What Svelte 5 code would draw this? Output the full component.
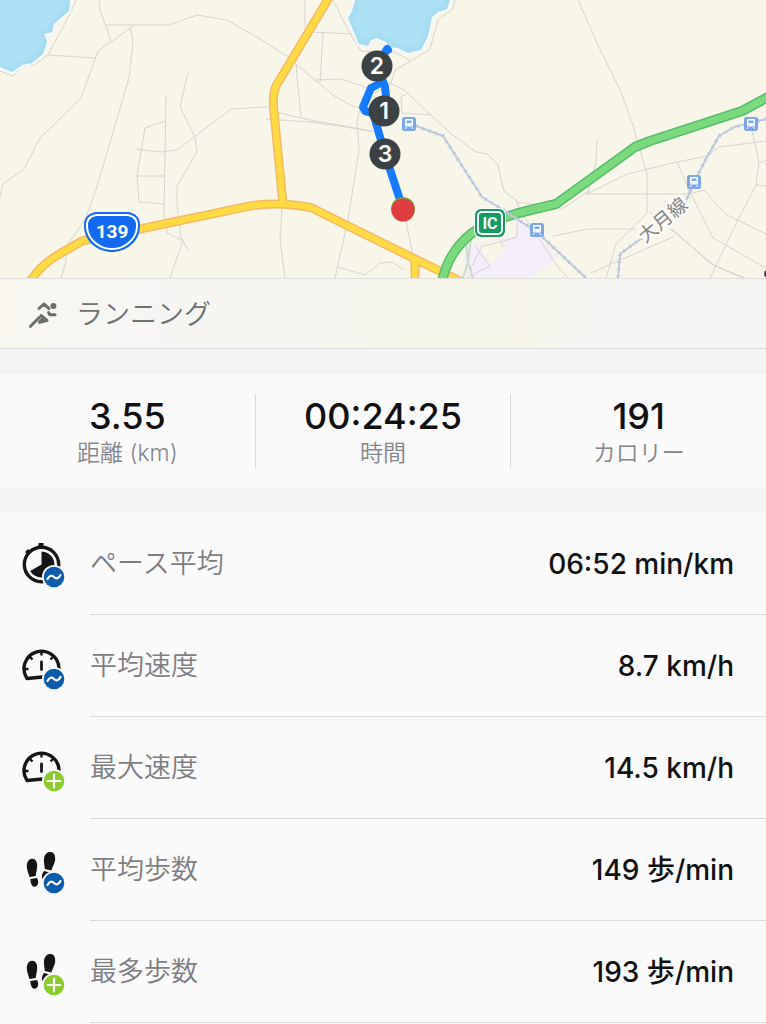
<script lang="ts">
  const stats = [
    { value: '3.55', label: '距離 (km)' },
    { value: '00:24:25', label: '時間' },
    { value: '191', label: 'カロリー' }
  ];

  const rows = [
    { icon: 'timer', badge: 'avg', label: 'ペース平均', value: '06:52 min/km' },
    { icon: 'gauge', badge: 'avg', label: '平均速度', value: '8.7 km/h' },
    { icon: 'gauge', badge: 'max', label: '最大速度', value: '14.5 km/h' },
    { icon: 'steps', badge: 'avg', label: '平均歩数', value: '149 歩/min' },
    { icon: 'steps', badge: 'max', label: '最多歩数', value: '193 歩/min' }
  ];

  // small streets
  const streets = [
    'M76 0L70 14L48 55L34 65L22 66L13 76L0 71',
    'M48 55L96 58',
    'M100 0L99 7L111 41',
    'M106 25H169L197 15L227 20L260 39L287 56L297 65L333 95L352 106L361 108',
    'M133 26L98 51L81 98L40 138L24 169L3 184L0 197',
    'M130 27L133 41L129 78L96 190L85 220L68 244L65 265L61 278',
    'M166 95L164 216L167 233L183 241L188 250',
    'M165 121L145 128L137 175L139 202L164 204',
    'M137 176H164',
    'M135 149L161 152L177 150L231 109L266 107L280 113L310 120L372 131',
    'M188 73L180 107L195 137L197 152L177 186V204L181 237L183 241L170 278',
    'M305 0V28',
    'M333 0L348 30L361 51L395 52L411 61L395 70L391 83L375 93',
    'M312 32L352 34M323 33L320 83M296 65L301 117',
    'M314 80L341 79L368 88L390 83L404 90L449 132L476 152L488 154L498 165L501 180L504 191L516 200L520 211L558 267L568 278',
    'M266 119L310 122L340 126L374 132',
    'M360 108L357 122L359 150L348 220L335 278',
    'M455 0L453 9L438 20L430 49L411 61',
    'M406 94L401 97L402 113L432 115',
    'M282 208L280 240L285 278',
    'M337 267L365 275L380 263L392 262L404 270',
    'M406 221L415 266',
    'M578 0L597 43L620 90L633 125L637 140L647 174V213L616 244L606 278',
    'M597 140L596 163L587 194H690L704 190',
    'M587 194L627 174L677 162L707 156L719 147L766 141',
    'M677 162L691 194L713 238L766 268',
    'M560 210L570 204L590 190M516 202L560 208',
    'M553 236L588 229H636',
    'M591 273L675 236',
    'M665 200V214M650 212L715 266L766 288M672 229L711 264L745 278',
    'M704 190L725 214L766 234',
    'M752 130L759 162L756 185L733 230L710 278',
    'M766 160L759 163M756 185L766 186',
    'M517 222V237L500 242L482 246L470 270M475 246L490 266L466 278M500 240L503 247'
  ];

  // [x, y] of each station marker
  const stations = [[409, 124], [537, 230], [694, 182], [751, 124]];

  // kilometre marks along the run
  const marks = [
    { n: 2, x: 377, y: 66 },
    { n: 1, x: 384, y: 111 },
    { n: 3, x: 385, y: 154 }
  ];

  const railway = 'M416 126L443 136L482 197L500 208L537 232L586 278M766 119L734 127L719 136L707 157L694 182L684 206M642 238L620 254L618 278';
  const highways = 'M330 -4L276 86Q272 96 274 112L283 204M28 284Q40 266 56 256L82 241L140 229L250 206Q280 201 312 208L344 224L462 282M415 262V280';
  const expressway = 'M442 282Q448 252 472 233C490 219 525 211 556 204L635 147L650 141L742 111L770 96';
</script>

<main class="workout">
  <svg class="map" viewBox="0 0 766 278" role="img" aria-label="Route map">
    <defs>
      <filter id="shore" x="-10%" y="-10%" width="120%" height="120%">
        <feGaussianBlur stdDeviation="3" />
      </filter>
      <clipPath id="lakes">
        <path d="M0 0H70L69 11L54 24L52 32L44 34L47 42L43 54L32 63L22 65L12 72L0 67Z" />
        <path d="M355 0L352 11L348 18L351 25L359 44L368 46L371 40L377 38L386 42L389 47L398 48L408 53L421 50L428 36L432 17L438 12L447 9L450 0Z" />
      </clipPath>
    </defs>
    <rect class="land" width="766" height="278" />
    <path class="zone" d="M463 253L475 243L516 237V218L523 222L558 256L530 278H468Z" />
    <path class="land" d="M478 244L501 239L506 251L490 264Z" />
    <path class="ramp" d="M466 244L468 262L463 278M471 239L468 262L473 278" />
    <g class="streets">
      {#each streets as d}<path {d} />{/each}
    </g>

    <g class="coast">
      <path d="M0 0H70L69 11L54 24L52 32L44 34L47 42L43 54L32 63L22 65L12 72L0 67Z" />
      <path d="M355 0L352 11L348 18L351 25L359 44L368 46L371 40L377 38L386 42L389 47L398 48L408 53L421 50L428 36L432 17L438 12L447 9L450 0Z" />
    </g>
    <g clip-path="url(#lakes)">
      <rect class="water" width="766" height="100" />
      <path class="shore" filter="url(#shore)" d="M70 -4L69 11L54 24L52 32L44 34L47 42L43 54L32 63L22 65L12 72L-4 67M355 -4L352 11L348 18L351 25L359 44L368 46L371 40L377 38L386 42L389 47L398 48L408 53L421 50L428 36L432 17L438 12L447 9L450 -4" />
    </g>

    <path class="highway-edge" d={highways} />
    <path class="highway" d={highways} />
    <path class="expressway-edge" d={expressway} />
    <path class="expressway" d={expressway} />
    <path class="rail" d={railway} />
    <path class="rail-ties" d={railway} />

    <g class="shield">
      <path class="shield-blue" d="M95 212H129Q141 215 140 227C139 243 125 252 112 252S85 243 84 227Q83 215 95 212Z" />
      <path class="shield-line" d="M96 215H128Q138 217 137 227C136 241 123 249 112 249S88 241 87 227Q86 217 96 215Z" />
      <text x="112" y="238">139</text>
    </g>

    <g class="interchange">
      <rect class="ic-gap" x="474" y="208" width="32" height="30" rx="7" />
      <rect class="ic-edge" x="475" y="209" width="30" height="28" rx="6" />
      <rect class="ic-line" x="478" y="212" width="24" height="22" rx="4" />
      <text x="490" y="229">IC</text>
    </g>

    <text class="line-name" transform="translate(662 219) rotate(-40)" y="8">大月線</text>

    {#each stations as [x, y]}
      <g class="station" transform={`translate(${x} ${y})`}>
        <rect x="-7" y="-7" width="14" height="14" rx="2.5" />
        <path class="train" d="M-3 -5H3Q4 -5 4 -4V1.5Q4 2.5 3 2.5H-3Q-4 2.5 -4 1.5V-4Q-4 -5 -3 -5Z" />
        <path class="train-legs" d="M-2.5 3L-4 5M2.5 3L4 5" />
        <path class="train-window" d="M-2.5 -3.5H2.5V-1H-2.5ZM-2.5 .5H-1.5V1.5H-2.5ZM1.5 .5H2.5V1.5H1.5Z" />
      </g>
    {/each}

    <path class="route" d="M388 50L387 49L377 66L385 87L386 96L384 111M377 85L371 88L363 107L365 111L377 114M374 116L385 154L402 206" />
    <circle class="start" cx="403" cy="209" r="12" />
    <circle class="finish" cx="403" cy="210" r="11.5" />
    {#each marks as m}
      <circle class="mark" cx={m.x} cy={m.y} r="15.5" />
      <text class="mark-text" x={m.x} y={m.y + 8}>{m.n}</text>
    {/each}
    <circle class="edge-dot" cx="768" cy="274" r="4" />
  </svg>

  <header class="activity">
    <svg class="runner" viewBox="0 0 30 28" aria-hidden="true">
      <path d="M11 7.5L15.8 3L21 7.5M20.5 11.5L21.8 13.8H27M2.5 25.3L11.3 16.5M13 14.5L19 19.5L11.5 21.3L14 18.5" />
      <circle cx="25.4" cy="5" r="3" />
    </svg>
    <h1>ランニング</h1>
  </header>

  <section class="stats" aria-label="Summary">
    {#each stats as s}
      <div class="stat">
        <span class="stat-value">{s.value}</span>
        <span class="stat-label">{s.label}</span>
      </div>
    {/each}
  </section>

  <ul class="details">
    {#each rows as r}
      <li>
        <svg class="icon" viewBox="0 1 44 48" aria-hidden="true">
          {#if r.icon === 'timer'}
            <circle class="line" cx="19.5" cy="25.5" r="17.2" />
            <path class="fill" d="M19.5 25.5V12.5A13 13 0 1 1 8.2 32Z" />
            <path class="fill" d="M16.5 4H21.5V8H16.5ZM3 13L6 10L9 13L6 16Z" />
          {:else if r.icon === 'gauge'}
            <path class="line" d="M20.5 36L5 37.5A17.5 17.5 0 1 1 37 27" />
            <path class="tick" d="M19.5 10V14.5M7.5 15.5L10.5 18.5M31.5 15.5L28.5 18.5M2.5 28H6.5M36.5 28H32.5" />
            <path class="needle" d="M19.5 21V28.5" />
          {:else}
            <path class="fill" d="M10 13.7C13.5 13.4 15.4 17 15.2 21C15 25 14 28 13.7 31L7.5 32C6.5 28 4.7 25 4.8 21C4.9 17 6.5 14 10 13.7Z" />
            <path class="fill" d="M8.3 34L15 33C17 36 16.5 41.3 13 41.7C9.3 42 8.8 38 8.3 34Z" />
            <path class="fill" d="M28.5 7C32 7.2 33.2 10 33.2 14C33.1 18 30.8 20.5 29.5 25.5L22.8 24C22.8 20.5 21.5 18 22 14C22.5 9.5 25 6.8 28.5 7Z" />
            <path class="fill" d="M22 26L28 27.5L25 33L20 33.5C19.5 30.5 20.5 27.5 22 26Z" />
          {/if}
          <circle class="badge-gap" cx="32" cy="38" r="12" />
          <circle class={r.badge} cx="32" cy="38" r="10.3" />
          {#if r.badge === 'avg'}
            <path class="sign" d="M25.5 40C27.5 36 30 36 32 38S36.5 40 38.5 36" />
          {:else}
            <path class="sign" d="M25.5 38H38.5M32 31.5V44.5" />
          {/if}
        </svg>
        <div class="detail">
          <span class="label">{r.label}</span>
          <span class="value">{r.value}</span>
        </div>
      </li>
    {/each}
  </ul>
</main>

<style>
  :global(body) { background: #fafafa; }

  .workout {
    background: #f4f4f4;
    color: #111;
    font-family: Inter, "Noto Sans CJK JP", sans-serif;
  }

  /* Map */
  .map { display: block; width: 100%; height: auto; }
  .map path { stroke-linejoin: round; }
  .land { fill: #f8f5e9; }
  .zone { fill: #f4edfa; }
  .ramp { fill: none; stroke: #cbdccb; stroke-width: 2; }
  .streets { fill: none; stroke: #d6d4cf; stroke-width: 1; }
  .coast { fill: #f7fafa; stroke: #f7fafa; stroke-width: 4; }
  .water { fill: #ade1f5; }
  .shore { fill: none; stroke: #97d2ea; stroke-width: 3; }
  .highway, .highway-edge, .expressway, .expressway-edge { fill: none; }
  .highway-edge { stroke: #f4b967; stroke-width: 9; }
  .highway { stroke: #ffdb43; stroke-width: 6; }
  .expressway-edge { stroke: #56bd6c; stroke-width: 10; }
  .expressway { stroke: #7bda7e; stroke-width: 7; }
  .rail { fill: none; stroke: #bdc9dc; stroke-width: 2; }
  .rail-ties { fill: none; stroke: #b5c2d9; stroke-width: 4; stroke-dasharray: 1 6; }
  .map text { text-anchor: middle; }
  .shield-blue { fill: #136af0; }
  .shield-line { fill: none; stroke: #fff; stroke-width: 2; }
  .shield text { fill: #fff; font: 700 19px Roboto, sans-serif; }
  .ic-gap { fill: #fff; }
  .ic-edge { fill: #149b63; }
  .ic-line { fill: none; stroke: #fff; stroke-width: 2; }
  .interchange text { fill: #fff; font: 700 16px Roboto, sans-serif; }
  .line-name {
    fill: #858585;
    stroke: #fbfaf6;
    stroke-width: 5;
    paint-order: stroke;
    font-size: 19px;
  }
  .station rect { fill: #7ca6e5; }
  .train { fill: #fff; }
  .train-legs { fill: none; stroke: #fff; stroke-width: 1; }
  .train-window { fill: #7ca6e5; }
  .route { fill: none; stroke: #167aff; stroke-width: 8; stroke-linecap: round; }
  .start { fill: #75ad3c; }
  .finish { fill: #df3d40; }
  .mark { fill: #3c4144; }
  .mark-text { fill: #fff; font-size: 23px; font-weight: 600; }
  .edge-dot { fill: #444; }

  /* Activity type */
  .activity {
    display: flex;
    align-items: center;
    gap: 18px;
    box-sizing: border-box;
    height: 71px;
    padding: 2px 28px 0;
    border-top: 1px solid #dededb;
    border-bottom: 1px solid #dcdcdc;
    background: linear-gradient(90deg, #f8f6ee, #f6f6f4 12%, #f6f5f1 40%, #f6f5e9 56%, #f7f5e9 68%, #f5f5f3 76%, #f5f5f3);
  }
  .runner { width: 30px; height: 28px; }
  .runner path { fill: none; stroke: #6a6d68; stroke-width: 3; stroke-linecap: round; stroke-linejoin: round; }
  .runner circle { fill: #6a6d68; }
  h1 {
    margin: 0;
    color: #6f716f;
    font-size: 27px;
    font-weight: 350;
    line-height: 40px;
  }

  /* Summary */
  .stats {
    display: flex;
    margin: 25px 0 24px;
    padding: 20px 0;
    background: #fafafa;
  }
  .stat {
    display: flex;
    flex: 1 1 0;
    flex-direction: column;
    align-items: center;
    height: 74px;
    border-right: 1px solid #d8d8d8;
  }
  .stat:last-child { border-right: 0; }
  .stat-value { font-size: 36px; font-weight: 450; line-height: 44px; }
  .stat-label { color: #85868a; font-size: 23px; font-weight: 350; line-height: 30px; }

  /* Details */
  .details {
    margin: 0;
    padding: 1px 0 0;
    background: #fafafa;
    list-style: none;
  }
  li { display: flex; align-items: center; padding-left: 22px; }
  .icon { flex: none; width: 44px; height: 48px; margin-right: 24px; }
  .detail {
    display: flex;
    flex: 1;
    align-items: center;
    justify-content: space-between;
    box-sizing: border-box;
    height: 102px;
    padding-right: 32px;
    border-bottom: 1px solid #d8d8d8;
  }
  .label, .value { line-height: 40px; }
  .label { color: #7d7e82; font-size: 27px; font-weight: 350; }
  .value { font-size: 28px; font-weight: 450; }

  .line { fill: none; stroke: #151515; stroke-width: 3.4; stroke-linecap: round; stroke-linejoin: round; }
  .fill { fill: #151515; }
  .tick { fill: none; stroke: #151515; stroke-width: 2.4; }
  .needle { fill: none; stroke: #151515; stroke-width: 2.8; stroke-linecap: round; }
  .badge-gap { fill: #fafafa; }
  .avg { fill: #0c5cab; }
  .max { fill: #8bcb2d; }
  .sign { fill: none; stroke: #fff; stroke-width: 2.2; stroke-linecap: round; }
</style>
